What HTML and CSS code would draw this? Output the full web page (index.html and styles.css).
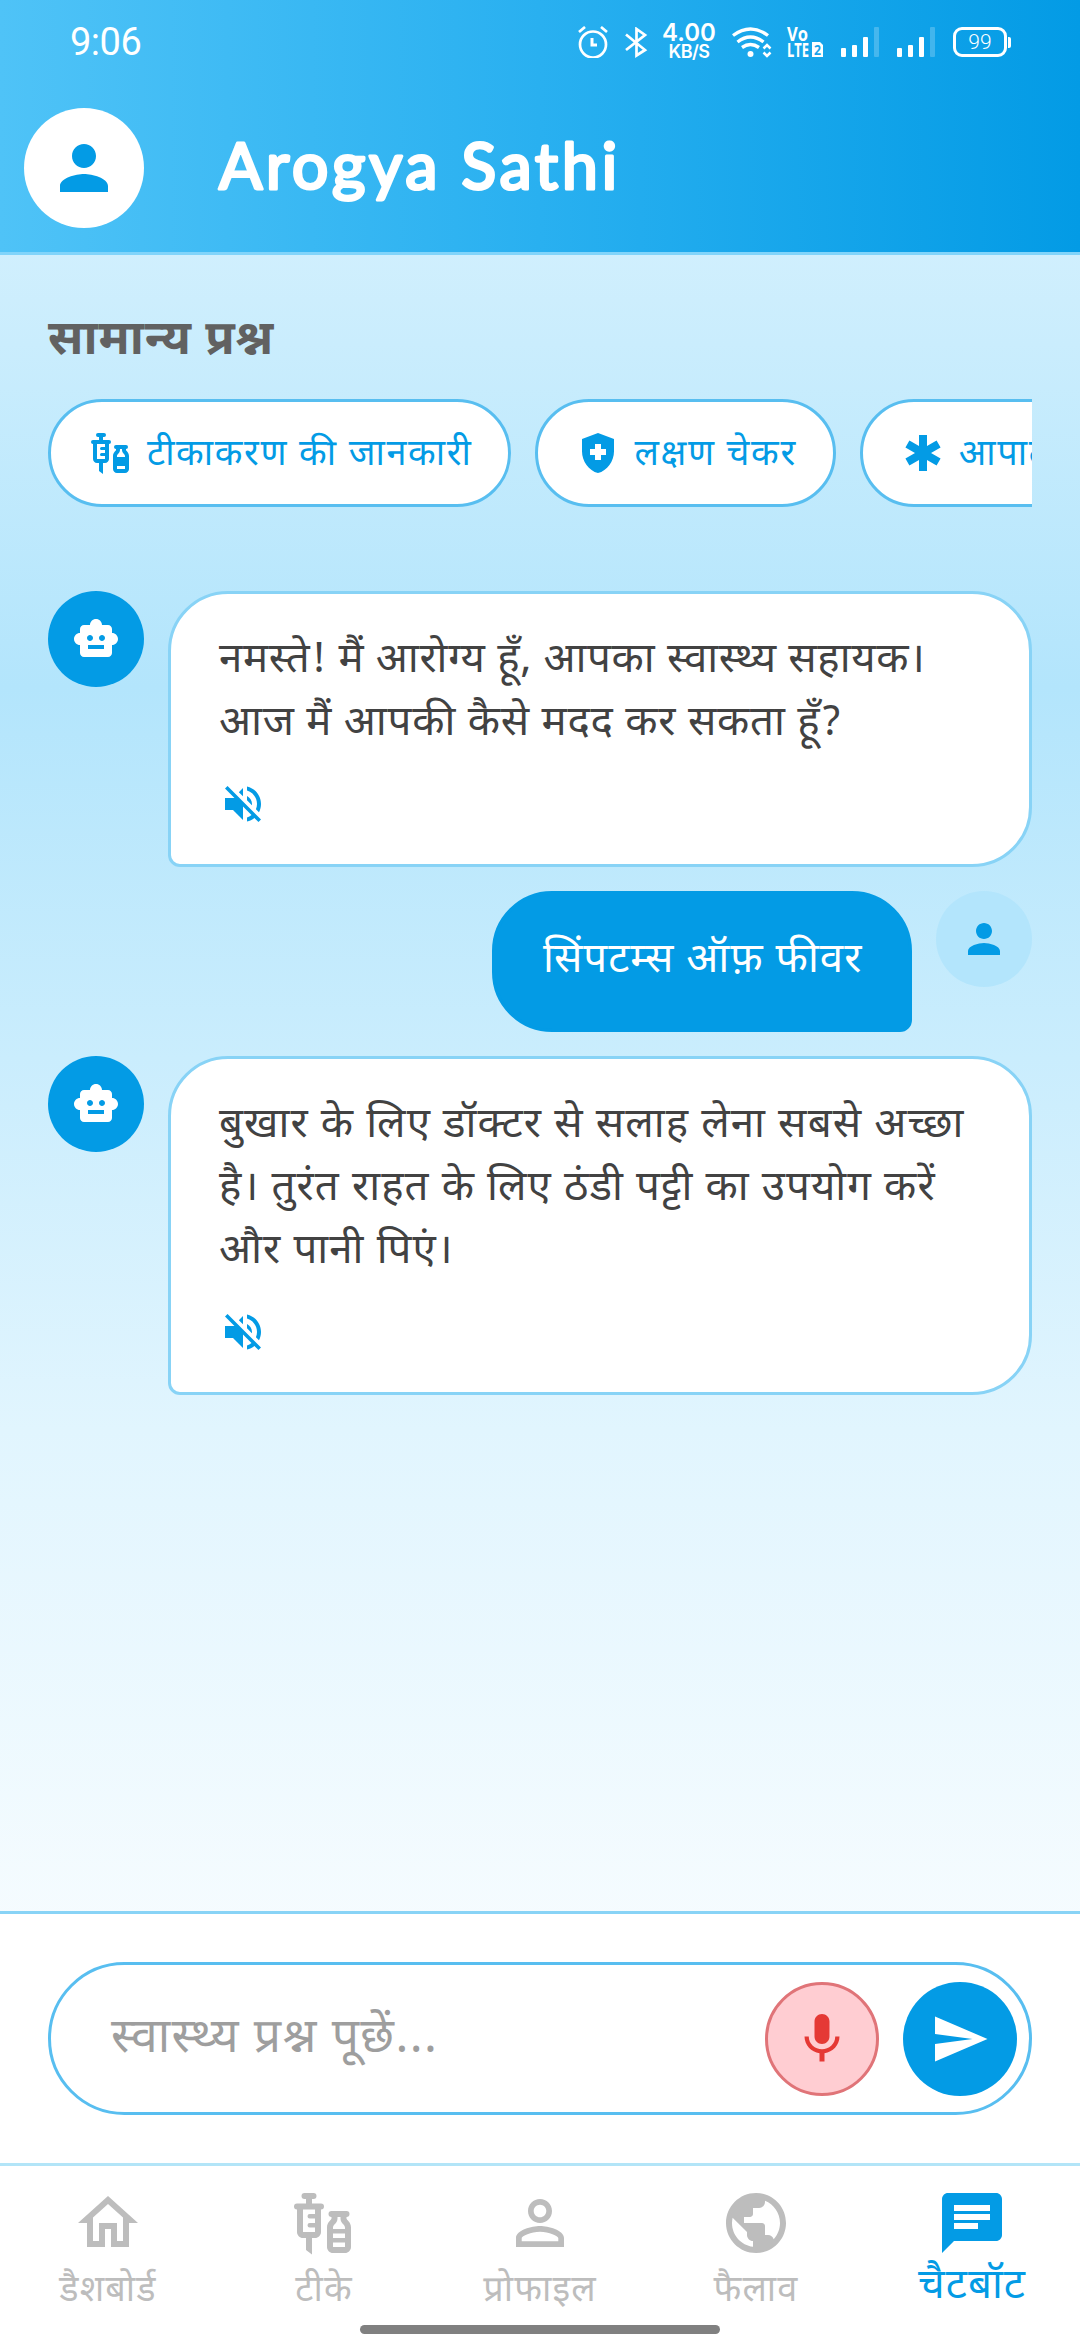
FILE: index.html
```html
<!DOCTYPE html>
<html lang="hi">
<head>
<meta charset="utf-8">
<title>Arogya Sathi</title>
<link rel="stylesheet" href="styles.css">
</head>
<body>
<svg class="defs" aria-hidden="true">
  <symbol id="person" viewBox="0 0 24 24"><path d="M12 12c2.21 0 4-1.79 4-4s-1.79-4-4-4-4 1.79-4 4 1.79 4 4 4zm0 2c-2.67 0-8 1.34-8 4v2h16v-2c0-2.66-5.33-4-8-4z"/></symbol>
  <symbol id="robot" viewBox="0 0 24 24"><path d="M20 9V7c0-1.100-.9-2-2-2h-3c0-1.660-1.340-3-3-3S9 3.340 9 5H6c-1.100 0-2 .9-2 2v2c-1.660 0-3 1.340-3 3s1.340 3 3 3v4c0 1.100.9 2 2 2h12c1.100 0 2-.9 2-2v-4c1.660 0 3-1.340 3-3s-1.340-3-3-3zM7.500 11.500c0-.83.67-1.500 1.500-1.500s1.500.67 1.500 1.500S9.830 13 9 13s-1.500-.67-1.500-1.500zM16 17H8v-2h8v2zm-1-4c-.83 0-1.500-.67-1.500-1.500S14.170 10 15 10s1.500.67 1.500 1.500S15.830 13 15 13z"/></symbol>
  <symbol id="mute" viewBox="0 0 24 24"><path d="M16.500 12c0-1.770-1.020-3.290-2.500-4.030v2.210l2.450 2.450c.03-.2.05-.41.05-.63zm2.500 0c0 .94-.2 1.820-.54 2.640l1.510 1.510C20.630 14.910 21 13.500 21 12c0-4.280-2.990-7.860-7-8.770v2.060c2.890.86 5 3.540 5 6.710zM4.270 3L3 4.270 7.730 9H3v6h4l5 5v-6.730l4.250 4.250c-.67.52-1.420.93-2.250 1.180v2.060c1.380-.31 2.630-.95 3.690-1.810L19.730 21 21 19.730l-9-9L4.270 3zM12 4L9.910 6.090 12 8.180V4z"/></symbol>
</svg>
<div class="app">
  <header class="header">
    <div class="status">
      <span class="time">9:06</span>
      <div class="status-icons">
        <svg class="ic-alarm" viewBox="0 0 30 32" fill="none" stroke="#fff" stroke-width="2.700"><circle cx="15" cy="18.500" r="13"/><path d="M14 12v7h5" stroke-width="3"/><path d="M1 6l6-5M29 6l-6-5"/></svg>
        <svg class="ic-bt" viewBox="0 0 23 31" fill="none" stroke="#fff" stroke-width="2.700"><path d="M1 7.500L20 23 11.500 28.500V2L20 8 1 23"/></svg>
        <div class="speed"><b>4.00</b><small>KB/S</small></div>
        <svg class="ic-wifi" viewBox="0 0 40 31" fill="none" stroke="#fff" stroke-width="3.400"><path d="M1 8.500Q18.500-4.500 36 8.500M5.500 15Q18.500 5 31.500 15M10 20.500Q18.500 14.500 27 20.500"/><circle cx="18.500" cy="27" r="3" fill="#fff" stroke="none"/><path d="M31.500 21.500l3.500-3.500 3.500 3.500M31.500 25.500l3.500 3.500 3.500-3.500" stroke-width="2.500"/></svg>
        <svg class="volte" viewBox="0 0 37 31"><text x="0" y="14" font-size="19" textLength="21" lengthAdjust="spacingAndGlyphs">Vo</text><text x="0" y="30" font-size="19" textLength="22" lengthAdjust="spacingAndGlyphs">LTE</text><path d="M25 15h8l3 3v12H25z" fill="#fff"/><text class="sim" x="27" y="28" font-size="14" textLength="7" lengthAdjust="spacingAndGlyphs">2</text></svg>
        <svg class="ic-signal" viewBox="0 0 38 30" fill="#fff"><rect y="21" width="5" height="9" rx="1"/><rect x="11" y="18" width="5" height="12" rx="1"/><rect x="22" y="10" width="5" height="20" rx="1"/><rect x="33" width="5" height="30" rx="1" opacity=".22"/></svg>
        <svg class="ic-signal second" viewBox="0 0 38 30" fill="#fff"><rect y="21" width="5" height="9" rx="1"/><rect x="11" y="18" width="5" height="12" rx="1"/><rect x="22" y="10" width="5" height="20" rx="1"/><rect x="33" width="5" height="30" rx="1" opacity=".22"/></svg>
        <div class="battery"><span>99</span></div><i class="battery-tip"></i>
      </div>
    </div>
    <div class="title-row">
      <div class="avatar-lg"><svg><use href="#person"/></svg></div>
      <svg class="title" viewBox="0 0 420 90"><text x="5" y="66" textLength="398" lengthAdjust="spacing">Arogya Sathi</text></svg>
    </div>
  </header>

  <main class="chat">
    <h2>सामान्य प्रश्न</h2>
    <div class="chips">
      <button class="chip"><svg viewBox="0 0 24 24"><path fill-rule="evenodd" d="M11 5.500H8V4h.5a1 1 0 0 0 0-2h-3a1 1 0 0 0 0 2H6v1.500H3a1 1 0 0 0 0 2V15c0 1.100.9 2 2 2h1v4l2 1.500V17h1c1.100 0 2-.9 2-2V7.500a1 1 0 0 0 0-2zM9 9H7.250a.75.75 0 0 0 0 1.500H9V12H7.250a.75.75 0 0 0 0 1.500H9V15H5V7.500h4zM19.500 10.500V10a1 1 0 0 0 0-2h-5a1 1 0 0 0 0 2v.5c0 .5-1.500 1.160-1.500 3V20c0 1.100.9 2 2 2h4c1.100 0 2-.9 2-2v-6.500c0-1.840-1.500-2.500-1.500-3zM16.500 10.500V10h1v.5c0 1.600 1.500 2 1.500 3V14h-4v-.5c0-1 1.500-1.400 1.500-3zM19 20h-4v-1.500h4z"/></svg><span>टीकाकरण की जानकारी</span></button>
      <button class="chip"><svg viewBox="0 0 24 24"><path fill-rule="evenodd" d="M10.500 13H8v-3h2.500V7.500h3V10H16v3h-2.500v2.500h-3zM12 2L4 5v6.090c0 5.050 3.410 9.760 8 10.910 4.590-1.150 8-5.860 8-10.910V5z"/></svg><span>लक्षण चेकर</span></button>
      <button class="chip"><svg viewBox="0 0 24 24"><path d="M20.790 9.230l-2-3.460L14 8.540V3h-4v5.540L5.210 5.770l-2 3.460L8 12l-4.790 2.770 2 3.460L10 15.460V21h4v-5.540l4.790 2.770 2-3.460L16 12z"/></svg><span>आपातकालीन</span></button>
    </div>

    <section class="messages">
      <div class="msg">
        <div class="avatar bot"><svg><use href="#robot"/></svg></div>
        <div class="bubble"><p class="snug">नमस्ते! मैं आरोग्य हूँ, आपका स्वास्थ्य सहायक।<br><span>आज मैं आपकी कैसे मदद कर सकता हूँ?</span></p><svg class="mute"><use href="#mute"/></svg></div>
      </div>
      <div class="msg mine">
        <div class="bubble"><p>सिंपटम्स ऑफ़ फीवर</p></div>
        <div class="avatar user"><svg><use href="#person"/></svg></div>
      </div>
      <div class="msg">
        <div class="avatar bot"><svg><use href="#robot"/></svg></div>
        <div class="bubble"><p>बुखार के लिए डॉक्टर से सलाह लेना सबसे अच्छा<br>है। तुरंत राहत के लिए ठंडी पट्टी का उपयोग करें<br>और पानी पिएं।</p><svg class="mute"><use href="#mute"/></svg></div>
      </div>
    </section>
  </main>

  <div class="composer">
    <div class="field">
      <span class="placeholder">स्वास्थ्य प्रश्न पूछें...</span>
      <button class="round mic"><svg viewBox="0 0 24 24"><path d="M12 14c1.660 0 2.990-1.340 2.990-3L15 5c0-1.660-1.340-3-3-3S9 3.340 9 5v6c0 1.660 1.340 3 3 3zm5.300-3c0 3-2.540 5.100-5.300 5.100S6.700 14 6.700 11H5c0 3.410 2.720 6.230 6 6.720V21h2v-3.280c3.280-.48 6-3.300 6-6.720h-1.700z"/></svg></button>
      <button class="round send"><svg viewBox="0 0 24 24"><path d="M2.010 21L23 12 2.010 3 2 10l15 2-15 2z"/></svg></button>
    </div>
  </div>

  <nav class="tabs">
    <a class="tab"><svg viewBox="0 0 24 24"><path d="M12 5.690l5 4.500V18h-2v-6H9v6H7v-7.810l5-4.500M12 3L2 12h3v8h6v-6h2v6h6v-8h3L12 3z"/></svg><span>डैशबोर्ड</span></a>
    <a class="tab"><svg viewBox="0 0 24 24"><path fill-rule="evenodd" d="M11 5.500H8V4h.5a1 1 0 0 0 0-2h-3a1 1 0 0 0 0 2H6v1.500H3a1 1 0 0 0 0 2V15c0 1.100.9 2 2 2h1v4l2 1.500V17h1c1.100 0 2-.9 2-2V7.500a1 1 0 0 0 0-2zM9 9H7.250a.75.75 0 0 0 0 1.500H9V12H7.250a.75.75 0 0 0 0 1.500H9V15H5V7.500h4zM19.500 10.500V10a1 1 0 0 0 0-2h-5a1 1 0 0 0 0 2v.5c0 .5-1.500 1.160-1.500 3V20c0 1.100.9 2 2 2h4c1.100 0 2-.9 2-2v-6.500c0-1.840-1.500-2.500-1.500-3zM16.500 10.500V10h1v.5c0 1.600 1.500 2 1.500 3V14h-4v-.5c0-1 1.500-1.400 1.500-3zM15 15.500h4V17h-4zM19 20h-4v-1.500h4z"/></svg><span>टीके</span></a>
    <a class="tab"><svg viewBox="0 0 24 24"><path d="M12 5.900c1.160 0 2.100.94 2.100 2.100s-.94 2.100-2.100 2.100S9.900 9.160 9.900 8s.94-2.100 2.100-2.100m0 9c2.970 0 6.100 1.460 6.100 2.100v1.100H5.900V17c0-.64 3.130-2.100 6.100-2.100M12 4C9.790 4 8 5.790 8 8s1.790 4 4 4 4-1.790 4-4-1.790-4-4-4zm0 9c-2.670 0-8 1.340-8 4v3h16v-3c0-2.660-5.330-4-8-4z"/></svg><span>प्रोफाइल</span></a>
    <a class="tab"><svg viewBox="0 0 24 24"><path d="M12 2C6.480 2 2 6.480 2 12s4.480 10 10 10 10-4.480 10-10S17.520 2 12 2zm-1 17.930c-3.950-.49-7-3.850-7-7.930 0-.62.08-1.210.21-1.790L9 15v1c0 1.100.9 2 2 2v1.930zm6.900-2.540c-.26-.81-1-1.390-1.900-1.390h-1v-3c0-.55-.45-1-1-1H8v-2h2c.55 0 1-.45 1-1V7h2c1.100 0 2-.9 2-2v-.41c2.930 1.190 5 4.060 5 7.410 0 2.080-.8 3.970-2.100 5.390z"/></svg><span>फैलाव</span></a>
    <a class="tab active"><svg viewBox="0 0 24 24"><path d="M20 2H4c-1.100 0-1.990.9-1.990 2L2 22l4-4h14c1.100 0 2-.9 2-2V4c0-1.100-.9-2-2-2zM6 6h12v2H6zm0 3h12v2H6zm8 5H6v-2h8z" fill-rule="evenodd"/></svg><span>चैटबॉट</span></a>
  </nav>
  <div class="home-bar"></div>
</div>
</body>
</html>
```
FILE: styles.css
```css
* { box-sizing: border-box; }
body { margin: 0; font-family: "Noto Sans Devanagari", "Noto Sans", sans-serif; }
svg { display: block; flex: none; }
button { font: inherit; margin: 0; }
.defs { position: absolute; width: 0; height: 0; }

.app {
  position: relative;
  width: 1080px;
  height: 2340px;
  display: flex;
  flex-direction: column;
  overflow: hidden;
  background: linear-gradient(180deg, #e1f5fe 0, #b3e5fc 687px, #e1f5fe 1430px, #fff 2160px);
}

.header {
  height: 255px;
  flex: none;
  border-bottom: 3px solid #81d4fa;
  background: linear-gradient(90deg, #4fc3f7, #29b0f0 50%, #039be5) padding-box;
}
.status { height: 84px; display: flex; align-items: center; justify-content: space-between; padding: 0 69px 0 70px; color: #fff; }
.time { font: 400 38px/1 Roboto, sans-serif; letter-spacing: -0.5px; }
.status-icons { display: flex; align-items: center; }
.ic-alarm { width: 30px; height: 32px; }
.ic-bt { width: 23px; height: 31px; margin-left: 17px; }
.speed { width: 52px; margin-left: 15px; display: flex; flex-direction: column; align-items: center; font-family: Inter, sans-serif; }
.speed b { font-size: 24px; line-height: 20px; font-weight: 600; }
.speed small { font-size: 18px; line-height: 18px; font-weight: 600; letter-spacing: -0.5px; }
.ic-wifi { width: 40px; height: 31px; margin-left: 17px; }
.volte { width: 37px; height: 31px; margin-left: 15px; overflow: visible; font-family: "Open Sans", sans-serif; font-weight: 700; fill: #fff; }
.sim { fill: #1ba3ea; }
.ic-signal { width: 38px; height: 30px; margin-left: 17px; }
.ic-signal.second { margin-left: 18px; }
.battery { width: 54px; height: 30px; margin-left: 18px; border: 3px solid #fff; border-radius: 9px; display: flex; align-items: center; justify-content: center; font: 300 21px/1 Roboto, sans-serif; }
.battery-tip { width: 3px; height: 11px; margin-left: 1px; background: #fff; border-radius: 0 2px 2px 0; }

.title-row { display: flex; align-items: center; height: 168px; padding: 0 24px; gap: 70px; }
.avatar-lg { width: 120px; height: 120px; border-radius: 50%; background: #fff; display: flex; align-items: center; justify-content: center; fill: #039be5; }
.avatar-lg svg { width: 72px; height: 72px; }
.title { width: 420px; height: 90px; overflow: visible; }
.title text { font: 400 64px Lato, sans-serif; fill: #fff; stroke: #fff; stroke-width: 3.2px; stroke-linejoin: round; }

.chat { flex: 1; padding: 0 48px; min-height: 0; }
h2 { margin: 52px 0 0; height: 68px; font-size: 48px; line-height: 72px; font-weight: 700; letter-spacing: 0.9px; color: #616161; }
.chips { display: flex; gap: 24px; margin-top: 24px; overflow: hidden; }
.chip { flex: none; height: 108px; display: flex; align-items: center; gap: 12px; padding: 0 36px; border: 3px solid #58bef0; border-radius: 60px; background: #fff; color: #039be5; fill: #039be5; font-size: 36px; letter-spacing: 1.65px; white-space: nowrap; }
.chip svg { width: 48px; height: 48px; }
.chip span { padding-top: 6px; }

.messages { display: flex; flex-direction: column; gap: 24px; margin-top: 84px; }
.msg { display: flex; align-items: flex-start; gap: 24px; }
.mine { justify-content: flex-end; }
.avatar { flex: none; width: 96px; height: 96px; border-radius: 50%; display: flex; align-items: center; justify-content: center; }
.avatar svg { width: 48px; height: 48px; }
.bot { background: #039be5; fill: #fff; }
.user { background: #b3e5fc; fill: #039be5; }
.bubble { width: 864px; padding: 36px 48px; border: 3px solid #88d3f6; border-radius: 60px 60px 60px 12px; background: #fff; }
.bubble p { margin: 0; font-size: 42px; line-height: 63px; letter-spacing: 1.12px; color: #424242; white-space: nowrap; }
.bubble .snug { letter-spacing: 0.64px; }
.bubble .snug span { letter-spacing: 0.76px; }
.mine .bubble { width: 420px; border-color: #039be5; border-radius: 60px 60px 12px 60px; background: #039be5; }
.mine .bubble p { letter-spacing: 1px; color: #fff; }
.mute { width: 48px; height: 48px; margin-top: 24px; fill: #039be5; }

.composer { height: 252px; flex: none; padding: 48px; border-top: 3px solid #88d3f6; background: #fff; }
.field { height: 153px; display: flex; align-items: center; gap: 24px; padding: 0 12px 0 60px; border: 3px solid #58bef0; border-radius: 77px; }
.placeholder { flex: 1; padding-top: 4px; font-size: 48px; line-height: 72px; letter-spacing: 1.4px; color: #9e9e9e; white-space: nowrap; }
.round { flex: none; width: 114px; height: 114px; padding: 0; border: 0; border-radius: 50%; display: flex; align-items: center; justify-content: center; }
.round svg { width: 60px; height: 60px; }
.mic { background: #ffcdd2; border: 3px solid #e07478; fill: #e53935; }
.send { background: #039be5; fill: #fff; }

.tabs { height: 177px; flex: none; display: grid; grid-template-columns: repeat(5, 1fr); border-top: 3px solid #b3e5f8; background: #fff; }
.tab { display: flex; flex-direction: column; align-items: center; padding-top: 21px; color: #bdbdbd; fill: #bdbdbd; }
.tab svg { width: 72px; height: 72px; }
.tab span { margin-top: 7px; font-size: 36px; line-height: 54px; letter-spacing: 1.1px; white-space: nowrap; }
.active { color: #039be5; fill: #039be5; }
.active span { margin-top: 2px; font-size: 42px; letter-spacing: 1px; }
.home-bar { position: absolute; left: 360px; bottom: 6px; width: 360px; height: 9px; border-radius: 5px; background: #808080; }
```
